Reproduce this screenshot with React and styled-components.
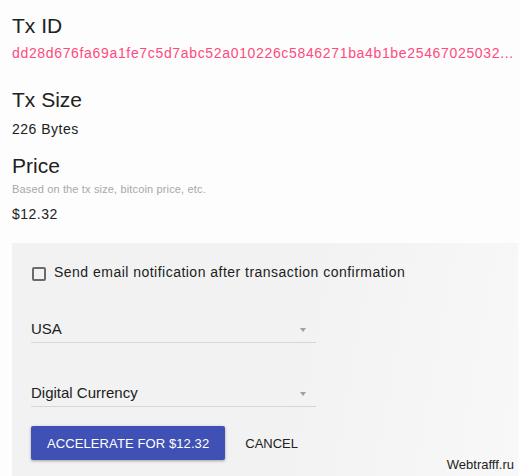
import React from 'react';
import styled, { createGlobalStyle } from 'styled-components';

const GlobalStyle = createGlobalStyle`
    html, body {
        margin: 0;
        padding: 0;
        background: #fdfdfd;
        overflow: hidden;
        font-family: "Liberation Sans", Arial, sans-serif;
        color: #212121;
    }
`

const Page = styled.div`
    position: relative;
    width: 520px;
    height: 476px;
`

const Info = styled.div`
    padding: 14px 12px 0 12px;
`

const Section = styled.section`
    margin-top: ${p => p.$top || 0}px;
`

const Heading = styled.h2`
    margin: 0;
    font-size: 21px;
    line-height: 24px;
    font-weight: normal;
    color: #212121;
`

const Hash = styled.div`
    margin-top: 5px;
    font-size: 14px;
    line-height: 20px;
    letter-spacing: 0.66px;
    color: #ff4a7d;
    white-space: nowrap;
`

const Value = styled.div`
    margin-top: ${p => p.$top || 0}px;
    font-size: 14px;
    line-height: 20px;
    letter-spacing: 0.5px;
    color: #212121;
`

const Hint = styled.div`
    margin-top: 4.5px;
    font-size: 11px;
    line-height: 14px;
    letter-spacing: 0.15px;
    color: #a8a8a8;
`

const Panel = styled.div`
    margin: 19px 2px 0 12px;
    padding: 19px 19px 16px 19px;
    background: linear-gradient(100deg, #f2f2f2 55%, #f8f8f8 100%);
`

const CheckRow = styled.label`
    display: flex;
    align-items: flex-start;
    font-size: 14px;
    line-height: 20px;
    letter-spacing: 0.48px;
    color: #212121;
`

const Box = styled.span`
    box-sizing: border-box;
    width: 14px;
    height: 14px;
    margin: 5px 8px 0 1px;
    border: 2px solid #6b6b6b;
    border-radius: 2px;
    background: transparent;
`

const Select = styled.div`
    display: flex;
    align-items: center;
    justify-content: space-between;
    width: 285px;
    margin-top: ${p => p.$top}px;
    padding-bottom: 3px;
    border-bottom: 1px solid #d6d6d6;
    font-size: 15px;
    line-height: 20px;
    color: #212121;
`

const Arrow = styled.span`
    width: 0;
    height: 0;
    margin: 2px 10px 0 0;
    border-left: 3.5px solid transparent;
    border-right: 3.5px solid transparent;
    border-top: 4px solid #a0a0a0;
`

const Actions = styled.div`
    display: flex;
    align-items: center;
    margin-top: 19px;
`

const PrimaryButton = styled.button`
    height: 34px;
    padding: 0 16px;
    border: none;
    border-radius: 2px;
    background: #3f51b5;
    color: #fff;
    font-family: "Liberation Sans", Arial, sans-serif;
    font-size: 13px;
    letter-spacing: 0.1px;
    box-shadow: 0 1px 3px rgba(0, 0, 0, 0.35);
    cursor: pointer;
`

const TextButton = styled.button`
    margin-left: 20px;
    padding: 0;
    border: none;
    background: transparent;
    color: #212121;
    font-family: "Liberation Sans", Arial, sans-serif;
    font-size: 13px;
    cursor: pointer;
`

const Watermark = styled.div`
    position: absolute;
    right: 6px;
    bottom: 4px;
    font-size: 13px;
    line-height: 15px;
    color: #1e1e1e;
`

const App = () => {

    // shortened id as the page shows it
    const txId = 'dd28d676fa69a1fe7c5d7abc52a010226c5846271ba4b1be25467025032...';

    return (
        <Page>
            <GlobalStyle />
            <Info>
                <Section>
                    <Heading>Tx ID</Heading>
                    <Hash>{txId}</Hash>
                </Section>
                <Section $top={24.5}>
                    <Heading>Tx Size</Heading>
                    <Value $top={7.5}>226 Bytes</Value>
                </Section>
                <Section $top={14.5}>
                    <Heading>Price</Heading>
                    <Hint>Based on the tx size, bitcoin price, etc.</Hint>
                    <Value $top={8}>$12.32</Value>
                </Section>
            </Info>

            <Panel>
                <CheckRow>
                    <Box />
                    Send email notification after transaction confirmation
                </CheckRow>
                <Select $top={37}>
                    <span>USA</span>
                    <Arrow />
                </Select>
                <Select $top={40}>
                    <span>Digital Currency</span>
                    <Arrow />
                </Select>
                <Actions>
                    <PrimaryButton>ACCELERATE FOR $12.32</PrimaryButton>
                    <TextButton>CANCEL</TextButton>
                </Actions>
            </Panel>

            <Watermark>Webtrafff.ru</Watermark>
        </Page>
    );
};

export default App;
